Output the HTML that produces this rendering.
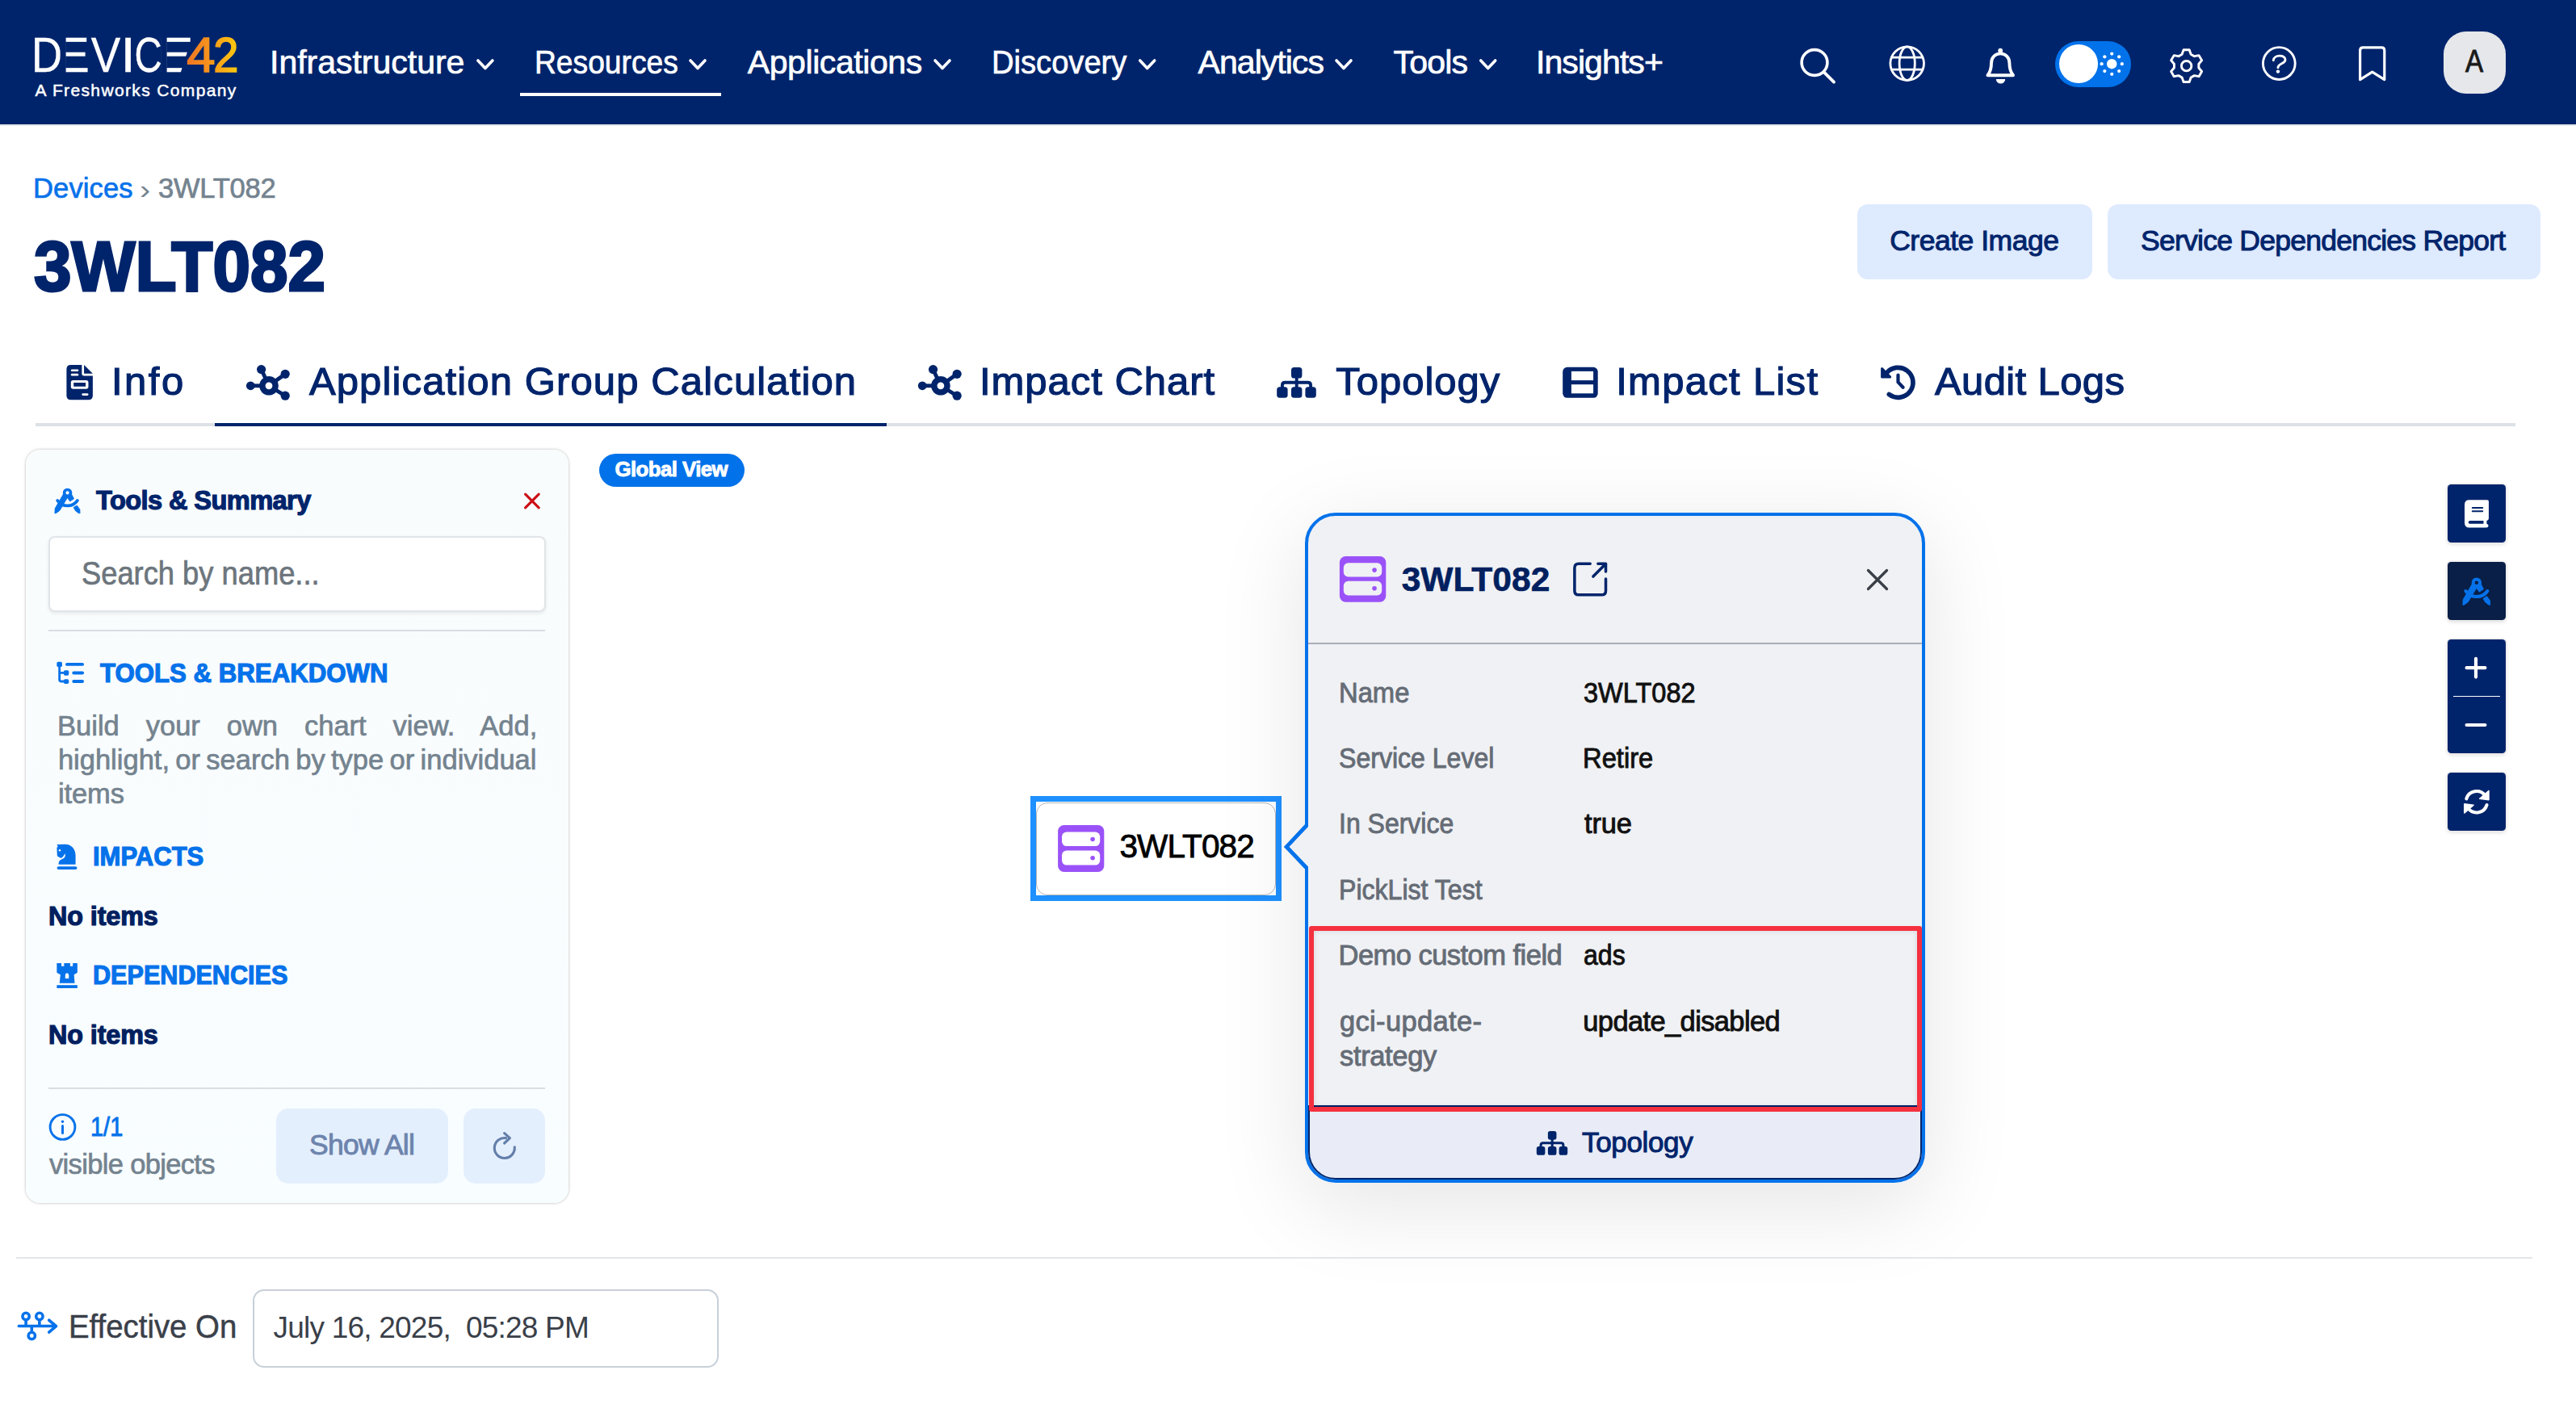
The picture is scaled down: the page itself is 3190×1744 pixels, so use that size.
<!DOCTYPE html>
<html lang="en"><head><meta charset="utf-8"><title>3WLT082 - Device42</title>
<style>
html,body{margin:0;padding:0;background:#fff}
html{overflow:hidden}
body{width:3190px;height:1744px;position:relative;overflow:hidden;font-family:"Liberation Sans", sans-serif}
.t{position:absolute;white-space:pre;margin:0}
.b{position:absolute;box-sizing:border-box}
#ico{position:absolute;left:0;top:0;pointer-events:none}
</style></head><body>
<main>
<header id="topbar"><nav>
<div class="b" style="left:0px;top:0px;width:3190px;height:154px;background:#00246b"></div>
<div class="b" style="left:0px;top:154px;width:3190px;height:2px;background:#e3e6eb"></div>
<div class="b" style="left:644px;top:114.5px;width:249px;height:4.5px;background:#fff"></div>
<div class="b" style="left:2545px;top:51px;width:94px;height:57px;background:#0272ea;border-radius:29px"></div>
<div class="b" style="left:2550px;top:55.2px;width:47.6px;height:47.6px;background:#fff;border-radius:50%"></div>
<div class="b" style="left:3026px;top:39px;width:77px;height:76.5px;background:#e5e7eb;border-radius:28px"></div>
<div class="t" style="left:334.0px;top:57.1px;font-size:41px;line-height:41px;font-weight:400;color:#fff;letter-spacing:-0.01px;-webkit-text-stroke:0.7px #fff;">Infrastructure</div>
<div class="t" style="left:661.7px;top:57.1px;font-size:41px;line-height:41px;font-weight:400;color:#fff;transform:scaleX(0.9075);transform-origin:0 0;-webkit-text-stroke:0.7px #fff;">Resources</div>
<div class="t" style="left:925.8px;top:57.1px;font-size:41px;line-height:41px;font-weight:400;color:#fff;letter-spacing:-0.43px;-webkit-text-stroke:0.7px #fff;">Applications</div>
<div class="t" style="left:1228.3px;top:57.1px;font-size:41px;line-height:41px;font-weight:400;color:#fff;transform:scaleX(0.9300);transform-origin:0 0;-webkit-text-stroke:0.7px #fff;">Discovery</div>
<div class="t" style="left:1483.6px;top:57.1px;font-size:41px;line-height:41px;font-weight:400;color:#fff;letter-spacing:-0.97px;-webkit-text-stroke:0.7px #fff;">Analytics</div>
<div class="t" style="left:1725.5px;top:57.1px;font-size:41px;line-height:41px;font-weight:400;color:#fff;letter-spacing:-0.82px;-webkit-text-stroke:0.7px #fff;">Tools</div>
<div class="t" style="left:1902.0px;top:57.1px;font-size:41px;line-height:41px;font-weight:400;color:#fff;letter-spacing:-0.92px;-webkit-text-stroke:0.7px #fff;">Insights+</div>
<div class="t" style="left:43.5px;top:101.4px;font-size:21px;line-height:21px;font-weight:400;color:#fff;letter-spacing:1.36px;-webkit-text-stroke:0.5px #fff;">A Freshworks Company</div>
<div class="t" style="left:3052.9px;top:57.1px;font-size:38px;line-height:38px;font-weight:400;color:#1a1a1a;transform:scaleX(0.8720);transform-origin:0 0;-webkit-text-stroke:0.9px #1a1a1a;">A</div>
<svg style="position:absolute;left:0;top:0" width="400" height="154" viewBox="0 0 400 154">
<defs><linearGradient id="lg" gradientUnits="userSpaceOnUse" x1="232" y1="0" x2="293" y2="0"><stop offset="0" stop-color="#ee7623"/><stop offset=".45" stop-color="#f7941d"/><stop offset="1" stop-color="#fdc70f"/></linearGradient></defs>
<text y="89" font-family="Liberation Sans, sans-serif" font-size="60.8" fill="#fff" stroke="#fff" stroke-width="0.4"><tspan x="38.96" textLength="38.16" lengthAdjust="spacingAndGlyphs">D</tspan><tspan x="70.24" textLength="40.58" lengthAdjust="spacingAndGlyphs">E</tspan><tspan x="112.76" textLength="36.48" lengthAdjust="spacingAndGlyphs">V</tspan><tspan x="149.27" textLength="18.77" lengthAdjust="spacingAndGlyphs">I</tspan><tspan x="166.39" textLength="34.21" lengthAdjust="spacingAndGlyphs">C</tspan><tspan x="193.91" textLength="45.63" lengthAdjust="spacingAndGlyphs">E</tspan></text>
<rect x="74.78" y="44" width="6.82" height="48" fill="#00246b"/><rect x="199.07" y="44" width="7.53" height="48" fill="#00246b"/>
<polygon points="238.6,44 245,44 245,92 223,92" fill="#00246b"/>
<text y="89" font-family="Liberation Sans, sans-serif" font-size="60.8" fill="url(#lg)" stroke="url(#lg)" stroke-width="1.6"><tspan x="231.25" textLength="35.21" lengthAdjust="spacingAndGlyphs">4</tspan><tspan x="264.18" textLength="31.13" lengthAdjust="spacingAndGlyphs">2</tspan></text>
</svg>
</nav></header>
<section id="page-header">
<div class="b" style="left:2300px;top:253px;width:291px;height:93px;background:#deeafe;border-radius:13px"></div>
<div class="b" style="left:2610px;top:253px;width:536px;height:93px;background:#deeafe;border-radius:13px"></div>
<div class="t" style="left:41.1px;top:216.3px;font-size:34.5px;line-height:34.5px;font-weight:400;color:#0672ea;letter-spacing:0.11px;-webkit-text-stroke:0.7px #0672ea;">Devices</div>
<div class="t" style="left:173.3px;top:216.7px;font-size:34px;line-height:34px;font-weight:400;color:#74838f;transform:scaleX(1.1655);transform-origin:0 0;">›</div>
<div class="t" style="left:196.0px;top:216.3px;font-size:34.5px;line-height:34.5px;font-weight:400;color:#74838f;letter-spacing:-0.21px;-webkit-text-stroke:0.7px #74838f;">3WLT082</div>
<div class="t" style="left:41.8px;top:286.4px;font-size:88px;line-height:88px;font-weight:700;color:#00246b;transform:scaleX(0.9503);transform-origin:0 0;-webkit-text-stroke:3.0px #00246b;">3WLT082</div>
<div class="t" style="left:2340.2px;top:281.1px;font-size:35.5px;line-height:35.5px;font-weight:400;color:#00246b;letter-spacing:-0.49px;-webkit-text-stroke:1.0px #00246b;">Create Image</div>
<div class="t" style="left:2651.1px;top:281.1px;font-size:35.5px;line-height:35.5px;font-weight:400;color:#00246b;letter-spacing:-0.75px;-webkit-text-stroke:1.0px #00246b;">Service Dependencies Report</div>
</section>
<nav id="tabs">
<div class="b" style="left:44px;top:524px;width:3071px;height:4px;background:#dde1e6"></div>
<div class="b" style="left:266px;top:524px;width:832px;height:4px;background:#00246b"></div>
<div class="t" style="left:138.0px;top:448.4px;font-size:49px;line-height:49px;font-weight:400;color:#00246b;letter-spacing:2.48px;-webkit-text-stroke:1.2px #00246b;">Info</div>
<div class="t" style="left:382.9px;top:448.4px;font-size:49px;line-height:49px;font-weight:400;color:#00246b;letter-spacing:1.13px;-webkit-text-stroke:1.2px #00246b;">Application Group Calculation</div>
<div class="t" style="left:1213.0px;top:448.4px;font-size:49px;line-height:49px;font-weight:400;color:#00246b;letter-spacing:0.96px;-webkit-text-stroke:1.2px #00246b;">Impact Chart</div>
<div class="t" style="left:1654.3px;top:448.4px;font-size:49px;line-height:49px;font-weight:400;color:#00246b;letter-spacing:0.96px;-webkit-text-stroke:1.2px #00246b;">Topology</div>
<div class="t" style="left:2001.2px;top:448.4px;font-size:49px;line-height:49px;font-weight:400;color:#00246b;letter-spacing:1.29px;-webkit-text-stroke:1.2px #00246b;">Impact List</div>
<div class="t" style="left:2396.0px;top:448.4px;font-size:49px;line-height:49px;font-weight:400;color:#00246b;letter-spacing:0.37px;-webkit-text-stroke:1.2px #00246b;">Audit Logs</div>
</nav>
<aside id="tools-summary">
<div class="b" style="left:31.8px;top:556.6px;width:672.2px;height:933.4px;background:linear-gradient(#f9fcfd,#f8fdff);border-radius:18px;box-shadow:0 0 3.5px rgba(0,0,0,.3)"></div>
<div class="b" style="left:59.5px;top:663.5px;width:616.5px;height:94.0px;background:#fff;border:2px solid #e1e5e9;border-radius:8px;box-shadow:0 2px 4px rgba(0,0,0,.08)"></div>
<div class="b" style="left:60.3px;top:779.5px;width:614.9px;height:2.0px;background:#d9dee3"></div>
<div class="b" style="left:60.3px;top:1346.5px;width:614.9px;height:2.0px;background:#d9dee3"></div>
<div class="b" style="left:341.7px;top:1373px;width:213.3px;height:93px;background:#e4effd;border-radius:15px"></div>
<div class="b" style="left:574px;top:1373px;width:101.2px;height:93px;background:#e4effd;border-radius:15px"></div>
<div class="t" style="left:119.0px;top:604.1px;font-size:32.6px;line-height:32.6px;font-weight:700;color:#00246b;letter-spacing:-0.59px;-webkit-text-stroke:1.2px #00246b;">Tools &amp; Summary</div>
<div class="t" style="left:101.0px;top:690.1px;font-size:40px;line-height:40px;font-weight:400;color:#6c757d;transform:scaleX(0.9076);transform-origin:0 0;-webkit-text-stroke:0.7px #6c757d;">Search by name...</div>
<div class="t" style="left:124.0px;top:818.1px;font-size:32.6px;line-height:32.6px;font-weight:700;color:#0672ea;transform:scaleX(0.9578);transform-origin:0 0;-webkit-text-stroke:1.2px #0672ea;">TOOLS &amp; BREAKDOWN</div>
<div class="t" style="left:71.1px;top:881.8px;font-size:34.5px;line-height:34.5px;font-weight:400;color:#74838f;word-spacing:23.33px;-webkit-text-stroke:0.7px #74838f;">Build your own chart view. Add,</div>
<div class="t" style="left:71.9px;top:923.8px;font-size:34.5px;line-height:34.5px;font-weight:400;color:#74838f;word-spacing:-2.24px;-webkit-text-stroke:0.7px #74838f;">highlight, or search by type or individual</div>
<div class="t" style="left:71.9px;top:965.5px;font-size:34.5px;line-height:34.5px;font-weight:400;color:#74838f;letter-spacing:-0.10px;-webkit-text-stroke:0.7px #74838f;">items</div>
<div class="t" style="left:115.0px;top:1045.4px;font-size:32.6px;line-height:32.6px;font-weight:700;color:#0672ea;transform:scaleX(0.9520);transform-origin:0 0;-webkit-text-stroke:1.2px #0672ea;">IMPACTS</div>
<div class="t" style="left:60.0px;top:1119.2px;font-size:32.3px;line-height:32.3px;font-weight:700;color:#00205f;letter-spacing:-0.09px;-webkit-text-stroke:1.2px #00205f;">No items</div>
<div class="t" style="left:115.0px;top:1192.4px;font-size:32.6px;line-height:32.6px;font-weight:700;color:#0672ea;transform:scaleX(0.9389);transform-origin:0 0;-webkit-text-stroke:1.2px #0672ea;">DEPENDENCIES</div>
<div class="t" style="left:60.0px;top:1265.5px;font-size:32.3px;line-height:32.3px;font-weight:700;color:#00205f;letter-spacing:-0.09px;-webkit-text-stroke:1.2px #00205f;">No items</div>
<div class="t" style="left:112.4px;top:1379.4px;font-size:33.5px;line-height:33.5px;font-weight:400;color:#0672ea;transform:scaleX(0.8647);transform-origin:0 0;-webkit-text-stroke:0.9px #0672ea;">1/1</div>
<div class="t" style="left:61.0px;top:1424.6px;font-size:34.5px;line-height:34.5px;font-weight:400;color:#74838f;letter-spacing:-0.66px;-webkit-text-stroke:0.7px #74838f;">visible objects</div>
<div class="t" style="left:383.1px;top:1401.3px;font-size:35.5px;line-height:35.5px;font-weight:400;color:#6d84ad;letter-spacing:-0.77px;-webkit-text-stroke:0.9px #6d84ad;">Show All</div>
</aside>
<section id="chart-canvas">
<div class="b" style="left:742px;top:562px;width:180px;height:41px;background:#0272ea;border-radius:21px"></div>
<div class="b" style="left:1276px;top:986px;width:310.7px;height:129.7px;background:#fff;border:7px solid #1e90ff"></div>
<div class="b" style="left:1283px;top:993.5px;width:297px;height:115.0px;background:#fff;border:1px solid #b5b5b5;border-radius:14px"></div>
<div class="b" style="left:3031px;top:600px;width:72px;height:72px;background:#00246b;box-shadow:0 0 0 1.5px rgba(238,235,235,.95),0 2px 5px rgba(0,0,0,.16);border-radius:4.5px;"></div>
<div class="b" style="left:3031px;top:696px;width:72px;height:72px;background:#091f47;box-shadow:0 0 0 1.5px rgba(238,235,235,.95),0 2px 5px rgba(0,0,0,.16);border-radius:4.5px;"></div>
<div class="b" style="left:3031px;top:792px;width:72px;height:141px;background:#00246b;box-shadow:0 0 0 1.5px rgba(238,235,235,.95),0 2px 5px rgba(0,0,0,.16);border-radius:4.5px;"></div>
<div class="b" style="left:3037.8px;top:861.8px;width:58.2px;height:1.6px;background:#fff"></div>
<div class="b" style="left:3031px;top:957px;width:72px;height:72px;background:#00246b;box-shadow:0 0 0 1.5px rgba(238,235,235,.95),0 2px 5px rgba(0,0,0,.16);border-radius:4.5px;"></div>
<div class="t" style="left:761.5px;top:569.0px;font-size:25.8px;line-height:25.8px;font-weight:700;color:#fff;letter-spacing:-0.56px;-webkit-text-stroke:0.9px #fff;">Global View</div>
<div class="t" style="left:1386.4px;top:1027.6px;font-size:40.5px;line-height:40.5px;font-weight:400;color:#000;letter-spacing:-0.87px;-webkit-text-stroke:0.8px #000;">3WLT082</div>
</section>
<section id="node-popup">
<div class="b" style="left:1616px;top:634.5px;width:768px;height:830.3px;background:#f0f1f4;border:4px solid #0572ea;border-radius:38px;box-shadow:0 26px 110px 4px rgba(0,0,0,.10)"></div>
<div class="b" style="left:1620px;top:795.8px;width:760px;height:2.0px;background:#a9afb8"></div>
<div class="b" style="left:1620px;top:1368.5px;width:760px;height:92.3px;background:#e9ecf6;border:2px solid #00246b;border-radius:0 0 34px 34px"></div>
<div class="b" style="left:1621.4px;top:1146.5px;width:759.1px;height:230.2px;border:6px solid #f5303f;border-radius:3px;box-shadow:inset 0 0 6px rgba(0,0,0,.12)"></div>
<div class="t" style="left:1735.7px;top:697.3px;font-size:42.5px;line-height:42.5px;font-weight:700;color:#00205f;letter-spacing:0.04px;-webkit-text-stroke:0.6px #00205f;">3WLT082</div>
<div class="t" style="left:1658.4px;top:841.0px;font-size:34.5px;line-height:34.5px;font-weight:400;color:#656c76;transform:scaleX(0.9494);transform-origin:0 0;-webkit-text-stroke:0.9px #656c76;">Name</div>
<div class="t" style="left:1961.2px;top:841.0px;font-size:34.5px;line-height:34.5px;font-weight:400;color:#111;transform:scaleX(0.9424);transform-origin:0 0;-webkit-text-stroke:0.9px #111;">3WLT082</div>
<div class="t" style="left:1658.3px;top:921.6px;font-size:34.5px;line-height:34.5px;font-weight:400;color:#656c76;transform:scaleX(0.9290);transform-origin:0 0;-webkit-text-stroke:0.9px #656c76;">Service Level</div>
<div class="t" style="left:1960.4px;top:921.6px;font-size:34.5px;line-height:34.5px;font-weight:400;color:#111;transform:scaleX(0.9483);transform-origin:0 0;-webkit-text-stroke:0.9px #111;">Retire</div>
<div class="t" style="left:1658.4px;top:1003.2px;font-size:34.5px;line-height:34.5px;font-weight:400;color:#656c76;transform:scaleX(0.9269);transform-origin:0 0;-webkit-text-stroke:0.9px #656c76;">In Service</div>
<div class="t" style="left:1961.9px;top:1003.2px;font-size:34.5px;line-height:34.5px;font-weight:400;color:#111;letter-spacing:-0.10px;-webkit-text-stroke:0.9px #111;">true</div>
<div class="t" style="left:1658.4px;top:1084.7px;font-size:34.5px;line-height:34.5px;font-weight:400;color:#656c76;transform:scaleX(0.9293);transform-origin:0 0;-webkit-text-stroke:0.9px #656c76;">PickList Test</div>
<div class="t" style="left:1657.5px;top:1166.2px;font-size:34.5px;line-height:34.5px;font-weight:400;color:#656c76;letter-spacing:-0.53px;-webkit-text-stroke:0.9px #656c76;">Demo custom field</div>
<div class="t" style="left:1961.2px;top:1166.2px;font-size:34.5px;line-height:34.5px;font-weight:400;color:#111;transform:scaleX(0.9296);transform-origin:0 0;-webkit-text-stroke:0.9px #111;">ads</div>
<div class="t" style="left:1659.0px;top:1247.8px;font-size:34.5px;line-height:34.5px;font-weight:400;color:#656c76;letter-spacing:0.33px;-webkit-text-stroke:0.9px #656c76;">gci-update-</div>
<div class="t" style="left:1960.3px;top:1247.8px;font-size:34.5px;line-height:34.5px;font-weight:400;color:#111;letter-spacing:-0.63px;-webkit-text-stroke:0.9px #111;">update_disabled</div>
<div class="t" style="left:1659.0px;top:1291.1px;font-size:34.5px;line-height:34.5px;font-weight:400;color:#656c76;letter-spacing:-0.35px;-webkit-text-stroke:0.9px #656c76;">strategy</div>
<div class="t" style="left:1959.0px;top:1397.4px;font-size:35px;line-height:35px;font-weight:400;color:#00246b;letter-spacing:-0.35px;-webkit-text-stroke:1.0px #00246b;">Topology</div>
</section>
<footer id="effective-on">
<div class="b" style="left:20px;top:1557px;width:3116px;height:2px;background:#e3e6e9"></div>
<div class="b" style="left:312.5px;top:1597px;width:577.3px;height:96.8px;background:#fff;border:2px solid #c8d0d8;border-radius:14px"></div>
<div class="t" style="left:84.7px;top:1622.7px;font-size:40.5px;line-height:40.5px;font-weight:400;color:#3a4049;transform:scaleX(0.9472);transform-origin:0 0;-webkit-text-stroke:0.5px #3a4049;">Effective On</div>
<div class="t" style="left:338.6px;top:1626.0px;font-size:37px;line-height:37px;font-weight:400;color:#3a4049;letter-spacing:-0.79px;">July 16, 2025,  05:28 PM</div>
</footer>
</main>
<svg id="ico" width="3190" height="1744" viewBox="0 0 3190 1744">
<polyline points="591.9,75.0 600.9,84.5 609.9,75.0" fill="none" stroke="#fff" stroke-width="3.6" stroke-linecap="round" stroke-linejoin="round"/>
<polyline points="855.0,75.0 864.0,84.5 873.0,75.0" fill="none" stroke="#fff" stroke-width="3.6" stroke-linecap="round" stroke-linejoin="round"/>
<polyline points="1158.0,75.0 1167.0,84.5 1176.0,75.0" fill="none" stroke="#fff" stroke-width="3.6" stroke-linecap="round" stroke-linejoin="round"/>
<polyline points="1411.7,75.0 1420.7,84.5 1429.7,75.0" fill="none" stroke="#fff" stroke-width="3.6" stroke-linecap="round" stroke-linejoin="round"/>
<polyline points="1655.0,75.0 1664.0,84.5 1673.0,75.0" fill="none" stroke="#fff" stroke-width="3.6" stroke-linecap="round" stroke-linejoin="round"/>
<polyline points="1833.7,75.0 1842.7,84.5 1851.7,75.0" fill="none" stroke="#fff" stroke-width="3.6" stroke-linecap="round" stroke-linejoin="round"/>
<circle cx="2247" cy="77.5" r="15.9" stroke="#fff" fill="none" stroke-width="3.6"/><line x1="2259.2" y1="89.8" x2="2271" y2="101.6" stroke="#fff" fill="none" stroke-width="3.8" stroke-linecap="round"/>
<circle cx="2361.7" cy="78.6" r="20.8" stroke="#fff" fill="none" stroke-width="2.8"/><ellipse cx="2361.7" cy="78.6" rx="9.6" ry="20.8" stroke="#fff" fill="none" stroke-width="2.8"/><line x1="2342.2999999999997" y1="71.1" x2="2381.1" y2="71.1" stroke="#fff" fill="none" stroke-width="2.7"/><line x1="2342.2999999999997" y1="86.1" x2="2381.1" y2="86.1" stroke="#fff" fill="none" stroke-width="2.7"/>
<path d="M2477.2,66.4 C2470.5,66.4 2466,71.5 2466,78 C2466,85 2464.5,89.5 2461.4,93.3 L2493,93.3 C2489.9,89.5 2488.4,85 2488.4,78 C2488.4,71.5 2483.9,66.4 2477.2,66.4 Z" stroke="#fff" fill="none" stroke-width="3.9" stroke-linejoin="round"/><circle cx="2477.2" cy="62.7" r="2.9" fill="#fff"/><path d="M2471.8,97.9 A5.7,5.7 0 0 0 2483.2,97.9 Z" fill="#fff"/>
<circle cx="2615.2" cy="79.2" r="6.2" fill="#fff"/><circle cx="2627.80" cy="79.20" r="2.1" fill="#fff"/><circle cx="2624.11" cy="88.11" r="2.1" fill="#fff"/><circle cx="2615.20" cy="91.80" r="2.1" fill="#fff"/><circle cx="2606.29" cy="88.11" r="2.1" fill="#fff"/><circle cx="2602.60" cy="79.20" r="2.1" fill="#fff"/><circle cx="2606.29" cy="70.29" r="2.1" fill="#fff"/><circle cx="2615.20" cy="66.60" r="2.1" fill="#fff"/><circle cx="2624.11" cy="70.29" r="2.1" fill="#fff"/>
<path d="M2702.08,67.27 L2704.02,61.77 L2711.18,61.77 L2713.12,67.27 L2717.29,69.68 L2723.03,68.61 L2726.61,74.81 L2722.81,79.24 L2722.81,84.06 L2726.61,88.49 L2723.03,94.69 L2717.29,93.62 L2713.12,96.03 L2711.18,101.53 L2704.02,101.53 L2702.08,96.03 L2697.91,93.62 L2692.17,94.69 L2688.59,88.49 L2692.39,84.06 L2692.39,79.24 L2688.59,74.81 L2692.17,68.61 L2697.91,69.68Z" fill="none" stroke="#fff" stroke-width="2.9" stroke-linejoin="round"/><circle cx="2707.6" cy="81.65" r="6.2" fill="none" stroke="#fff" stroke-width="2.9"/>
<circle cx="2822.3" cy="78.55" r="19.9" stroke="#fff" fill="none" stroke-width="2.9"/><path d="M2815.3,74.8 C2815.6,67.5 2830,67.3 2830,74 C2830,79 2821,78.6 2820.9,83.9" stroke="#fff" fill="none" stroke-width="2.9" stroke-linecap="round"/><circle cx="2820.9" cy="88.6" r="2.2" fill="#fff"/>
<path d="M2922.6,98.6 L2922.6,62.4 Q2922.6,58.8 2926.2,58.8 L2949.2,58.8 Q2952.8,58.8 2952.8,62.4 L2952.8,98.6 L2937.7,89.2 Z" stroke="#fff" fill="none" stroke-width="3.2" stroke-linejoin="round"/>
<g transform="translate(82.4,452) scale(0.08457)" fill="#00246b"><path d="M64,0 L224,0 L224,128 Q224,160 256,160 L384,160 L384,448 Q384,512 320,512 L64,512 Q0,512 0,448 L0,64 Q0,0 64,0 Z M256,0 L384,128 L256,128 Z"/><g fill="#fff"><rect x="64" y="64" width="112" height="32" rx="16"/><rect x="64" y="128" width="112" height="32" rx="16"/><path fill-rule="evenodd" d="M96,224 L288,224 Q320,224 320,256 L320,320 Q320,352 288,352 L96,352 Q64,352 64,320 L64,256 Q64,224 96,224 Z M104,260 L104,316 L280,316 L280,260 Z"/><rect x="224" y="416" width="96" height="32" rx="16"/></g></g>
<line x1="333.0" y1="477.8" x2="323.6" y2="457.6" stroke="#00246b" stroke-width="4.8"/><circle cx="323.6" cy="457.6" r="5.6" fill="#00246b"/><line x1="333.0" y1="477.8" x2="353.2" y2="463.3" stroke="#00246b" stroke-width="4.8"/><circle cx="353.2" cy="463.3" r="5.6" fill="#00246b"/><line x1="333.0" y1="477.8" x2="310.3" y2="477.8" stroke="#00246b" stroke-width="4.8"/><circle cx="310.3" cy="477.8" r="5.4" fill="#00246b"/><line x1="333.0" y1="477.8" x2="353.2" y2="490.2" stroke="#00246b" stroke-width="4.8"/><circle cx="353.2" cy="490.2" r="5.6" fill="#00246b"/><circle cx="333.0" cy="477.8" r="8.1" fill="#fff" stroke="#00246b" stroke-width="7.4"/>
<line x1="1164.9" y1="477.8" x2="1155.5" y2="457.6" stroke="#00246b" stroke-width="4.8"/><circle cx="1155.5" cy="457.6" r="5.6" fill="#00246b"/><line x1="1164.9" y1="477.8" x2="1185.1" y2="463.3" stroke="#00246b" stroke-width="4.8"/><circle cx="1185.1" cy="463.3" r="5.6" fill="#00246b"/><line x1="1164.9" y1="477.8" x2="1142.2" y2="477.8" stroke="#00246b" stroke-width="4.8"/><circle cx="1142.2" cy="477.8" r="5.4" fill="#00246b"/><line x1="1164.9" y1="477.8" x2="1185.1" y2="490.2" stroke="#00246b" stroke-width="4.8"/><circle cx="1185.1" cy="490.2" r="5.6" fill="#00246b"/><circle cx="1164.9" cy="477.8" r="8.1" fill="#fff" stroke="#00246b" stroke-width="7.4"/>
<rect x="1599.00" y="454.90" width="13.40" height="13.60" rx="3.60" fill="#00246b"/><rect x="1581.20" y="479.20" width="13.40" height="13.60" rx="3.60" fill="#00246b"/><rect x="1599.00" y="479.20" width="13.40" height="13.60" rx="3.60" fill="#00246b"/><rect x="1616.40" y="479.20" width="13.40" height="13.60" rx="3.60" fill="#00246b"/><path d="M1605.70,466.00 L1605.70,481.00 M1587.90,481.00 L1587.90,477.30 Q1587.90,473.80 1591.40,473.80 L1619.60,473.80 Q1623.10,473.80 1623.10,477.30 L1623.10,481.00" fill="none" stroke="#00246b" stroke-width="3.90"/>
<rect x="1935.2" y="454.8" width="43.5" height="38" rx="5.6" fill="#00246b"/><rect x="1945.9" y="459.9" width="27.2" height="11.2" fill="#fff"/><rect x="1945.9" y="476.2" width="27.2" height="11.1" fill="#fff"/>
<path d="M2335.92,462.41 A18.5,18.5 0 1 1 2339.37,488.57" fill="none" stroke="#00246b" stroke-width="5.7" stroke-linecap="round"/><path d="M2330.6,456.6 L2330.6,466.9 L2340.6,466.9 Z" fill="#00246b" stroke="#00246b" stroke-width="3" stroke-linejoin="round"/><polyline points="2350.5,464.6 2350.5,473.4 2356.6,479.8" fill="none" stroke="#00246b" stroke-width="4.2" stroke-linecap="round" stroke-linejoin="round"/>
<polygon points="78.34,612.16 68.11,629.84 67.90,635.93 69.69,635.51 73.95,632.39 83.45,616.50 86.60,621.02 91.55,617.78 88.65,612.16" fill="#0672ea" stroke="#0672ea" stroke-width="0.80" stroke-linejoin="round"/><polygon points="91.12,628.56 95.25,626.00 98.88,630.90 99.09,635.80 97.17,635.59 93.34,632.61" fill="#0672ea" stroke="#0672ea" stroke-width="0.80" stroke-linejoin="round"/><circle cx="83.54" cy="610.45" r="3.95" fill="#fafcfe" stroke="#0672ea" stroke-width="3.70"/><path d="M71.10,619.91 A15.10,15.10 0 0 0 95.98,619.91" fill="none" stroke="#0672ea" stroke-width="3.70" stroke-linecap="round"/>
<path d="M650.6,612.2 L667.2,628.8 M667.2,612.2 L650.6,628.8" stroke="#cc1016" stroke-width="3.2" stroke-linecap="round" fill="none"/>
<rect x="70.35" y="819.71" width="6.61" height="6.39" rx="1.9" fill="#0672ea"/><rect x="78.87" y="830.36" width="6.39" height="6.39" rx="1.9" fill="#0672ea"/><rect x="78.87" y="841.23" width="6.39" height="5.75" rx="1.9" fill="#0672ea"/><rect x="81.00" y="820.98" width="23.02" height="3.84" rx="1.95" fill="#0672ea"/><rect x="89.31" y="831.43" width="14.71" height="4.05" rx="2" fill="#0672ea"/><rect x="89.31" y="842.00" width="14.71" height="4.01" rx="2" fill="#0672ea"/><path d="M73.63,825.46 L73.63,841.66 Q73.63,844.00 76.31,844.00 L80.58,844.00 M73.63,833.47 L80.58,833.47" fill="none" stroke="#0672ea" stroke-width="2.8"/>
<path d="M70.43,1046.11 L80.58,1045.86 C88.67,1045.86 93.58,1052.17 93.58,1059.84 L93.58,1070.71 L72.48,1070.71 C72.69,1066.66 74.18,1065.38 77.17,1064.10 C80.15,1062.82 81.43,1060.69 80.58,1057.28 C78.87,1059.41 78.44,1061.54 76.31,1062.61 C75.03,1063.03 72.05,1061.54 70.86,1060.05 L70.35,1050.03 L71.71,1048.41 Z" fill="#0672ea"/><circle cx="73.97" cy="1053.36" r="1.25" fill="#fafcfe"/><rect x="70.56" y="1073.14" width="24.94" height="3.96" rx="2" fill="#0672ea"/>
<polygon points="70.35,1192.92 75.97,1192.92 75.97,1196.76 79.38,1196.76 79.38,1192.92 86.88,1192.92 86.88,1196.76 90.17,1196.76 90.17,1192.92 95.84,1192.92 95.84,1204.85 91.66,1207.20 92.51,1217.86 73.76,1217.86 74.82,1207.20 70.35,1204.85" fill="#0672ea"/><path d="M80.79,1211.89 L80.79,1207.84 Q80.79,1205.28 83.01,1205.28 Q85.26,1205.28 85.26,1207.84 L85.26,1211.89 Z" fill="#fafcfe"/><rect x="70.35" y="1220.20" width="25.49" height="3.75" fill="#0672ea"/>
<circle cx="77.5" cy="1396" r="15.4" fill="none" stroke="#0672ea" stroke-width="2.9"/><circle cx="77.5" cy="1389.2" r="1.7" fill="#0672ea"/><line x1="77.5" y1="1394.4" x2="77.5" y2="1403.6" stroke="#0672ea" stroke-width="3" stroke-linecap="round"/>
<path d="M626.54,1409.62 A12.5,12.5 0 1 0 637.25,1420.91" fill="none" stroke="#637eaa" stroke-width="3.1" stroke-linecap="round"/><polyline points="624.6,1403.6 631.4,1409.6 624.6,1416" fill="none" stroke="#637eaa" stroke-width="3.1" stroke-linecap="round" stroke-linejoin="round"/>
<rect x="1310.1" y="1022" width="57.2" height="58" rx="7.60" fill="#9a52f8"/><rect x="1315.00" y="1030.50" width="47.20" height="17.60" rx="5.80" fill="#fff"/><rect x="1315.00" y="1053.50" width="47.20" height="18.10" rx="5.80" fill="#fff"/><circle cx="1353.10" cy="1039.50" r="2.80" fill="#9a52f8"/><circle cx="1353.10" cy="1062.70" r="2.80" fill="#9a52f8"/>
<polygon points="1621,1022.5 1593,1048.9 1621,1075" fill="#f0f1f4"/><polyline points="1618.2,1022.3 1593.2,1048.9 1618.2,1075.3" fill="none" stroke="#0572ea" stroke-width="4.9" stroke-linejoin="miter"/>
<rect x="1658.9" y="689" width="57.4" height="56.7" rx="7.63" fill="#9a52f8"/><rect x="1663.82" y="697.31" width="47.37" height="17.21" rx="5.82" fill="#f0f1f4"/><rect x="1663.82" y="719.79" width="47.37" height="17.69" rx="5.82" fill="#f0f1f4"/><circle cx="1702.05" cy="706.11" r="2.81" fill="#9a52f8"/><circle cx="1702.05" cy="728.79" r="2.81" fill="#9a52f8"/>
<path d="M1969.20,698.30 L1955.00,698.30 Q1949.89,698.30 1949.89,703.41 L1949.89,731.70 Q1949.89,736.82 1955.00,736.82 L1983.41,736.82 Q1988.52,736.82 1988.52,731.70 L1988.52,716.93 M1972.90,714.09 L1988.52,698.30 M1978.86,698.30 L1988.52,698.30 L1988.52,708.12" fill="none" stroke="#00246b" stroke-width="3.5" stroke-linecap="round" stroke-linejoin="round"/>
<path d="M2313.5,706.5 L2336.5,729.5 M2336.5,706.5 L2313.5,729.5" stroke="#3a3f47" stroke-width="3.3" stroke-linecap="round" fill="none"/>
<rect x="1916.86" y="1400.90" width="10.59" height="10.74" rx="2.84" fill="#00246b"/><rect x="1902.80" y="1420.10" width="10.59" height="10.74" rx="2.84" fill="#00246b"/><rect x="1916.86" y="1420.10" width="10.59" height="10.74" rx="2.84" fill="#00246b"/><rect x="1930.61" y="1420.10" width="10.59" height="10.74" rx="2.84" fill="#00246b"/><path d="M1922.15,1409.67 L1922.15,1421.52 M1908.09,1421.52 L1908.09,1418.60 Q1908.09,1415.83 1910.86,1415.83 L1933.14,1415.83 Q1935.90,1415.83 1935.90,1418.60 L1935.90,1421.52" fill="none" stroke="#00246b" stroke-width="3.08"/>
<path d="M3057.79,619.15 L3080.05,619.15 Q3081.94,619.15 3081.94,621.04 L3081.94,641.96 Q3081.94,643.98 3080.05,644.66 L3079.38,644.99 L3079.38,648.70 L3080.73,649.38 Q3082.42,650.73 3081.07,652.42 Q3080.39,653.43 3078.70,653.43 L3057.79,653.43 Q3052.05,653.43 3052.05,647.69 L3052.05,624.89 Q3052.05,619.15 3057.79,619.15 Z" fill="#fff"/><rect x="3060.82" y="627.99" width="14.37" height="1.96" rx="0.9" fill="#00246b"/><rect x="3060.82" y="632.17" width="14.37" height="1.96" rx="0.9" fill="#00246b"/><path d="M3058.80,644.99 L3075.47,644.99 L3075.47,648.84 L3058.80,648.84 Q3056.77,648.84 3056.77,646.88 Q3056.77,644.99 3058.80,644.99 Z" fill="#00246b"/>
<polygon points="3061.23,723.59 3050.13,742.78 3049.90,749.39 3051.84,748.92 3056.46,745.55 3066.77,728.31 3070.19,733.21 3075.56,729.69 3072.41,723.59" fill="#0672ea" stroke="#0672ea" stroke-width="0.87" stroke-linejoin="round"/><polygon points="3075.09,741.39 3079.58,738.61 3083.51,743.93 3083.74,749.25 3081.66,749.02 3077.50,745.78" fill="#0672ea" stroke="#0672ea" stroke-width="0.87" stroke-linejoin="round"/><circle cx="3066.87" cy="721.74" r="4.29" fill="#091f47" stroke="#0672ea" stroke-width="4.01"/><path d="M3053.37,732.00 A16.38,16.38 0 0 0 3080.37,732.00" fill="none" stroke="#0672ea" stroke-width="4.01" stroke-linecap="round"/>
<path d="M3054.6,827.2 L3077.4,827.2 M3066,815.8 L3066,838.6" stroke="#fff" stroke-width="4.2" stroke-linecap="round" fill="none"/><path d="M3054.6,898 L3077.4,898" stroke="#fff" stroke-width="4.2" stroke-linecap="round" fill="none"/>
<path d="M3054.28,989.34 A13.2,13.2 0 0 1 3077.30,985.07" fill="none" stroke="#fff" stroke-width="4.1" stroke-linecap="round"/><path d="M3079.52,997.06 A13.2,13.2 0 0 1 3056.50,1001.33" fill="none" stroke="#fff" stroke-width="4.1" stroke-linecap="round"/><polygon points="3081.94,979.55 3081.94,990.61 3070.74,989.26" fill="#fff" stroke="#fff" stroke-width="1.6" stroke-linejoin="round"/><polygon points="3051.85,1006.94 3051.85,995.88 3063.05,997.23" fill="#fff" stroke="#fff" stroke-width="1.6" stroke-linejoin="round"/>
<path d="M23.31,1642.54 L68.84,1642.54 M60.69,1635.24 L69.53,1642.54 L60.69,1650.15 M32.10,1636.42 L32.10,1642.54 M48.87,1636.42 L48.87,1642.54 M39.29,1648.66 L39.29,1642.54" fill="none" stroke="#0672ea" stroke-width="3.6" stroke-linecap="round" stroke-linejoin="round"/><circle cx="32.10" cy="1630.56" r="4.2" fill="#fff" stroke="#0672ea" stroke-width="3.5"/><circle cx="48.87" cy="1630.56" r="4.2" fill="#fff" stroke="#0672ea" stroke-width="3.5"/><circle cx="39.29" cy="1654.52" r="4.2" fill="#fff" stroke="#0672ea" stroke-width="3.5"/>
</svg>
</body></html>
